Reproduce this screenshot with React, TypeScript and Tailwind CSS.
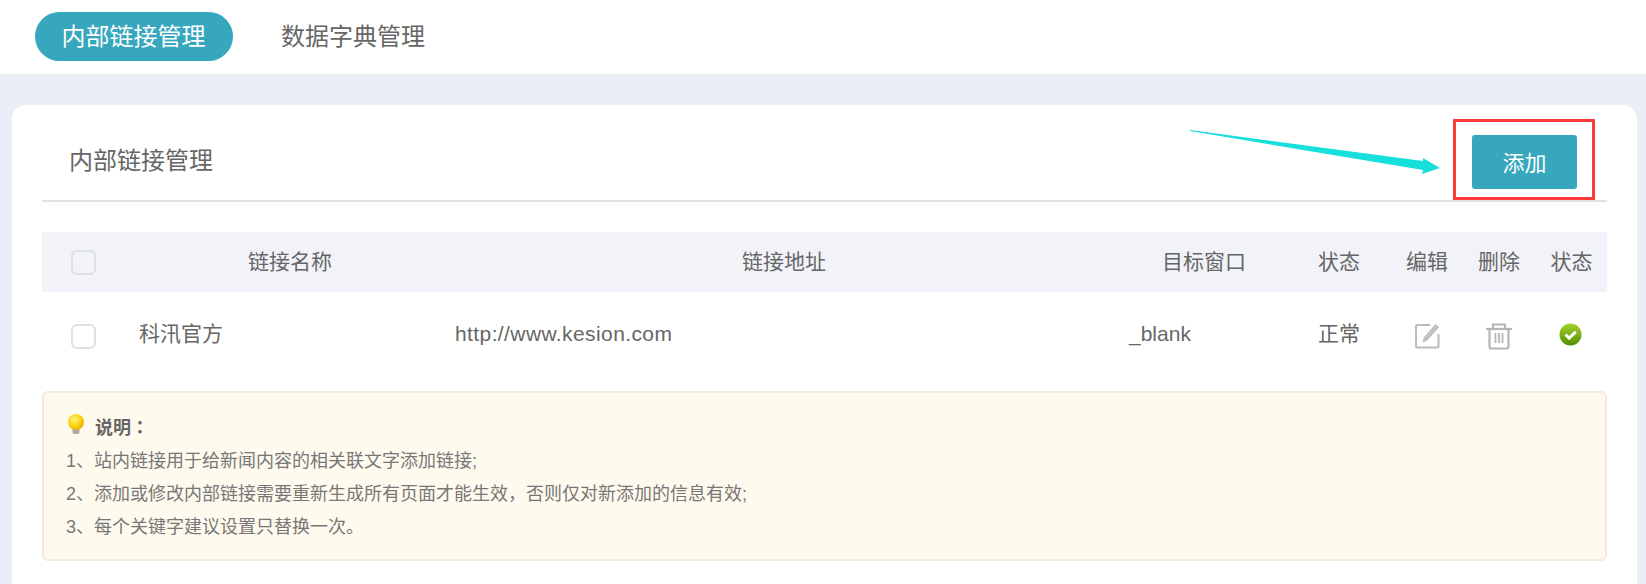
import React from 'react';

const tableCols = 'grid grid-cols-[83px_330px_658px_173px_106px_70px_74px_1fr] items-center';

const EditIcon = () => (
  <svg width="26" height="26" viewBox="0 0 26 26" fill="none" stroke="#b9bbbe" strokeWidth="2" className="mx-auto">
    <path d="M16 2H3.5A1.5 1.5 0 0 0 2 3.5V23a1.5 1.5 0 0 0 1.5 1.5H23a1.5 1.5 0 0 0 1.5-1.5V11" />
    <path d="M21.5 1.8l2.8 2.4L12.8 17l-3.4 1.8.9-3.8z" fill="#c4c6c9" strokeWidth="1.2" strokeLinejoin="round" />
  </svg>
);

const TrashIcon = () => (
  <svg width="26" height="27" viewBox="0 0 26 27" fill="none" stroke="#b4b6b9" strokeWidth="2.2" className="mx-auto">
    <path d="M0 6h26" />
    <path d="M7 6V1.5h12V6" />
    <path d="M3.5 6v17.5a2 2 0 0 0 2 2h15a2 2 0 0 0 2-2V6" />
    <path d="M9.5 10v10M13 10v10M16.5 10v10" strokeWidth="1.8" />
  </svg>
);

const OkIcon = () => (
  <svg width="23" height="23" viewBox="0 0 23 23" className="ml-[23px] mb-1">
    <defs>
      <linearGradient id="ok" x1="0" y1="0" x2="0" y2="1">
        <stop offset="0" stopColor="#a6d22c" />
        <stop offset="1" stopColor="#4f8f00" />
      </linearGradient>
    </defs>
    <circle cx="11.5" cy="11.5" r="11" fill="url(#ok)" />
    <path d="M6.5 11.5l3.6 3.6L16.8 8.8" fill="none" stroke="#fff" strokeWidth="3" />
  </svg>
);

const BulbIcon = () => (
  <svg width="18" height="21" viewBox="0 0 18 21" className="shrink-0 mb-2 ml-px">
    <defs>
      <radialGradient id="bulb" cx="0.4" cy="0.35" r="0.7">
        <stop offset="0" stopColor="#fff27a" />
        <stop offset="0.6" stopColor="#fbd20f" />
        <stop offset="1" stopColor="#e8a800" />
      </radialGradient>
    </defs>
    <rect x="5.5" y="14" width="7" height="6" rx="2" fill="#a9a9a4" />
    <circle cx="9" cy="8" r="8" fill="url(#bulb)" />
  </svg>
);

const Checkbox = () => (
  <span className="ml-[29px] block w-[25px] h-[25px] rounded-md border-2 border-[#dde0e4]" />
);

export default function App() {
  return (
    <div className="h-[584px] overflow-hidden bg-[#e9eef7] text-[#666] font-['Liberation_Sans','Noto_Sans_CJK_SC',sans-serif]">
      {/* Tabs */}
      <div className="h-[75px] bg-white border-b border-[#e4e7ec] pl-[35px] pt-3 flex items-start gap-[22px]">
        <button className="h-[49px] w-[198px] pr-px rounded-full bg-[#36a7bc] text-white text-2xl">内部链接管理</button>
        <button className="h-[49px] pl-[26px] pr-7 text-2xl text-[#666]">数据字典管理</button>
      </div>

      <div className="pt-[30px] pl-3 pr-[9px]">
        <div className="relative bg-white rounded-t-[14px] pl-[30px] pr-[30px] h-[600px]">
          {/* Arrow annotation */}
          <svg className="absolute left-[1178px] top-[25px]" width="251" height="45" viewBox="0 0 251 45">
            <polygon points="0,0 233,31 233,28 250,38 232,44 233,40 0,1" fill="#17dfdc" />
          </svg>

          <div className="h-[97px] border-b-2 border-[#dee2e8] flex items-start justify-between">
            <h2 className="pl-[27px] pt-[39px] text-2xl leading-[34px] font-normal">内部链接管理</h2>
            <div className="relative mt-[30px] mr-[30px]">
              <button className="w-[105px] h-[54px] pt-[2px] rounded-[3px] bg-[#36a7bc] text-white text-[22px]">添加</button>
              <span className="absolute -left-[19px] -right-[18px] -top-4 -bottom-[11px] border-[3px] border-[#ff3a3a]" />
            </div>
          </div>

          {/* Table */}
          <div className={`${tableCols} mt-[30px] h-[60px] bg-[#f1f3f8] text-[21px] text-center`}>
            <Checkbox />
            <div>链接名称</div>
            <div>链接地址</div>
            <div className="pl-[9px]">目标窗口</div>
            <div>状态</div>
            <div>编辑</div>
            <div>删除</div>
            <div>状态</div>
          </div>
          <div className={`${tableCols} h-[88px] text-[21px]`}>
            <Checkbox />
            <div className="pl-[14px] pb-1">科汛官方</div>
            <div className="pb-1 tracking-[0.4px]">http://www.kesion.com</div>
            <div className="pl-4 pb-1">_blank</div>
            <div className="text-center pb-1">正常</div>
            <EditIcon />
            <TrashIcon />
            <OkIcon />
          </div>

          {/* Notes */}
          <div className="mt-[11px] h-[170px] rounded-md border-2 border-[#f1ebde] bg-[#fffaee] pl-[22px] pt-[19px] text-lg leading-[33px] text-[#777]">
            <div className="flex items-center h-[33px]">
              <BulbIcon />
              <span className="ml-[10px] mb-1 font-bold text-lg text-[#666]">
                说明<span className="font-['Noto_Sans_CJK_TC',sans-serif]">：</span>
              </span>
            </div>
            <p>1、站内链接用于给新闻内容的相关联文字添加链接;</p>
            <p>2、添加或修改内部链接需要重新生成所有页面才能生效，否则仅对新添加的信息有效;</p>
            <p>3、每个关键字建议设置只替换一次。</p>
          </div>
        </div>
      </div>
    </div>
  );
}
